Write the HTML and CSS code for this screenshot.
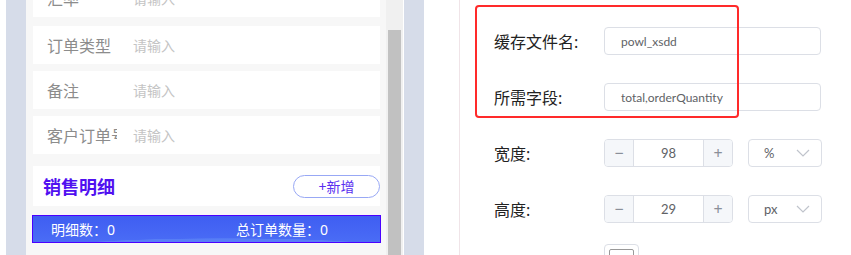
FILE: index.html
```html
<!DOCTYPE html>
<html lang="zh-CN">
<head>
  <meta charset="UTF-8">
  <meta name="viewport" content="width=device-width, initial-scale=1.0">
  <title>表单设计</title>
  <link rel="stylesheet" href="styles.css">
</head>
<body>
<div class="page">
  <div class="preview">
    <div class="edge"></div>
    <div class="rail"></div>
    <div class="phone">
      <div class="scroll">
        <div class="list">
          <div class="field first">
            <span class="label">汇率</span>
            <span class="placeholder">请输入</span>
          </div>
          <div class="field">
            <span class="label">订单类型</span>
            <span class="placeholder">请输入</span>
          </div>
          <div class="field">
            <span class="label">备注</span>
            <span class="placeholder">请输入</span>
          </div>
          <div class="field">
            <span class="label">客户订单号</span>
            <span class="placeholder">请输入</span>
          </div>

          <div class="section">
            <h3>销售明细</h3>
            <button class="add-btn">+新增</button>
          </div>

          <div class="summary">
            <span>明细数：0</span>
            <span>总订单数量：0</span>
          </div>
        </div>
      </div>
      <div class="scrollbar"><div class="thumb"></div></div>
    </div>
    <div class="rail rail-right"></div>
  </div>

  <div class="props">
    <div class="highlight"></div>

    <div class="row">
      <span class="row-label">缓存文件名:</span>
      <div class="text-input">powl_xsdd</div>
    </div>
    <div class="row">
      <span class="row-label">所需字段:</span>
      <div class="text-input">total,orderQuantity</div>
    </div>
    <div class="row">
      <span class="row-label">宽度:</span>
      <div class="number">
        <span class="step minus">−</span>
        <span class="value">98</span>
        <span class="step plus">+</span>
      </div>
      <div class="select">
        <span>%</span>
        <svg width="14" height="8" viewBox="0 0 14 8"><path d="M1 1 L7 7 L13 1" fill="none" stroke="#c0c4cc" stroke-width="1.2"/></svg>
      </div>
    </div>
    <div class="row">
      <span class="row-label">高度:</span>
      <div class="number">
        <span class="step minus">−</span>
        <span class="value">29</span>
        <span class="step plus">+</span>
      </div>
      <div class="select">
        <span>px</span>
        <svg width="14" height="8" viewBox="0 0 14 8"><path d="M1 1 L7 7 L13 1" fill="none" stroke="#c0c4cc" stroke-width="1.2"/></svg>
      </div>
    </div>
    <div class="row tall">
      <span class="row-label">背景色:</span>
      <div class="swatch"><div class="swatch-inner"></div></div>
    </div>
  </div>
</div>
</body>
</html>
```

FILE: styles.css
```css
body {
  margin: 0;
  font-family: "Noto Sans", "Noto Sans CJK SC", sans-serif;
  background-color: #fff;
}

.page {
  display: flex;
  height: 255px;
  overflow: hidden;
}

/* left: mobile preview */
.preview {
  display: flex;
  flex: none;
  width: 459px;
}

.edge {
  width: 6px;
}

.rail {
  width: 20px;
  background-color: #d6dce9;
}

.rail-right {
  margin-left: 1px;
  margin-right: 35px;
}

.phone {
  display: flex;
  width: 377px;
  background-color: #f7f7f7;
  overflow: hidden;
}

.scroll {
  width: 347px;
  padding: 0 6px 0 7px;
}

.list {
  margin-top: -21px;
}

.field {
  display: flex;
  align-items: center;
  height: 38px;
  padding-left: 14px;
  margin-bottom: 7px;
  background-color: #fff;
}

.field.first {
  margin-bottom: 9px;
}

.label {
  width: 70px;
  margin-right: 16px;
  overflow: hidden;
  white-space: nowrap;
  font-size: 16px;
  color: #8c8c8c;
}

.placeholder {
  font-size: 14px;
  color: #c4c4c4;
}

.section {
  display: flex;
  justify-content: space-between;
  align-items: center;
  height: 40px;
  margin-top: 12px;
  padding-left: 10px;
  background-color: #fff;
}

.section h3 {
  margin: 0;
  font-size: 18px;
  font-weight: bold;
  color: #5010f0;
}

.add-btn {
  width: 87px;
  height: 23px;
  padding: 0;
  border: 1px solid #98a8f5;
  border-radius: 12px;
  background-color: #fff;
  font-family: inherit;
  font-size: 14px;
  color: #5a30f0;
}

.summary {
  box-sizing: border-box;
  display: flex;
  justify-content: space-between;
  align-items: center;
  height: 28px;
  margin: 9px -1px 0;
  padding: 0 52px 0 18px;
  border: 1px solid #4a00ff;
  background: radial-gradient(ellipse 75% 55% at 55% 120%, #577ef6 60%, transparent 63%),
              linear-gradient(180deg, #3f5ef2 0%, #4a6cf5 100%);
  font-size: 14px;
  color: #fff;
}

.scrollbar {
  width: 17px;
  padding-top: 30px;
  background-color: #f0f0f0;
}

.thumb {
  width: 13px;
  height: 300px;
  margin-left: 2px;
  background-color: #c1c1c1;
}

/* right: property panel */
.props {
  position: relative;
  flex: 1;
  padding: 27px 0 0 34px;
  border-left: 1px solid #f0e4e8;
}

.highlight {
  position: absolute;
  left: 15px;
  top: 5px;
  width: 264px;
  height: 113px;
  box-sizing: border-box;
  border: 2px solid #ff2a2a;
  border-radius: 4px;
}

.row {
  display: flex;
  align-items: center;
  height: 28px;
  margin-bottom: 28px;
}

.row-label {
  width: 110px;
  font-size: 16px;
  color: #222;
}

.text-input {
  box-sizing: border-box;
  display: flex;
  align-items: center;
  width: 217px;
  height: 28px;
  padding: 0 16px;
  border: 1px solid #dcdfe6;
  border-radius: 4px;
  font-family: Lato, "Noto Sans", sans-serif;
  font-size: 12px;
  color: #606266;
}

.number {
  box-sizing: border-box;
  display: flex;
  width: 129px;
  height: 28px;
  border: 1px solid #dcdfe6;
  border-radius: 4px;
  overflow: hidden;
}

.step {
  display: flex;
  align-items: center;
  justify-content: center;
  width: 28px;
  background-color: #f5f7fa;
  font-size: 16px;
  color: #8a8f99;
}

.minus {
  border-right: 1px solid #dcdfe6;
}

.plus {
  border-left: 1px solid #dcdfe6;
}

.value {
  flex: 1;
  display: flex;
  align-items: center;
  justify-content: center;
  font-family: Lato, "Noto Sans", sans-serif;
  font-size: 13px;
  color: #606266;
}

.select {
  box-sizing: border-box;
  display: flex;
  justify-content: space-between;
  align-items: center;
  width: 74px;
  height: 28px;
  margin-left: 15px;
  padding: 0 11px 0 15px;
  border: 1px solid #dcdfe6;
  border-radius: 4px;
  font-family: Lato, "Noto Sans", sans-serif;
  font-size: 13px;
  color: #606266;
}

.row.tall {
  height: 36px;
  margin-top: -7px;
}

.swatch {
  box-sizing: border-box;
  width: 35px;
  height: 36px;
  padding: 4px;
  border: 1px solid #dcdfe6;
  border-radius: 4px;
}

.swatch-inner {
  height: 24px;
  border: 1px solid #999;
  border-radius: 2px;
}
```
